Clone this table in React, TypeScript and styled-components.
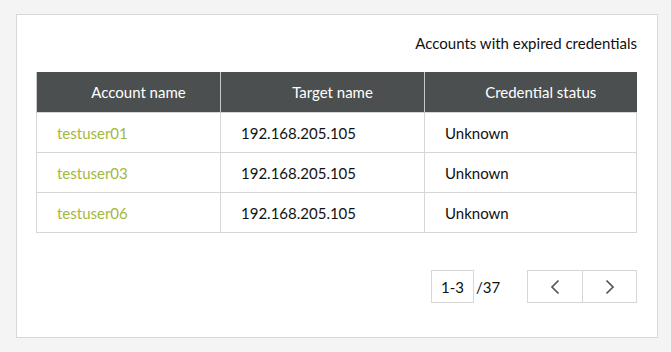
import React from "react";
import styled, {createGlobalStyle} from "styled-components";

const GlobalStyle = createGlobalStyle`
  html, body {
    margin: 0;
    padding: 0;
    background: #f4f4f4;
    font-family: "Source Sans Pro", Lato, "Noto Sans", sans-serif;
  }
`;

const Page = styled.div`
  padding: 14px 13px 14px 16px;
`;

const Card = styled.div`
  background: #fff;
  border: 1px solid #d9d9d9;
  padding: 18px 20px 0 19px;
  box-sizing: border-box;
  height: 324px;
`;

const Title = styled.div`
  text-align: right;
  font-size: 15px;
  line-height: 20px;
  color: #111;
  margin-bottom: 19px;
`;

const Table = styled.table`
  width: 100%;
  border-collapse: collapse;
  font-size: 15px;
`;

const Th = styled.th`
  background: #4b4f50;
  color: #fff;
  font-weight: 400;
  height: 40px;
  padding: 0 0 0 20px;
  text-align: center;
  border-left: 1px solid #c9c9c9;
`;

const Td = styled.td<{$link?: boolean}>`
  height: 39px;
  padding: 0 20px;
  border: 1px solid #d6d6d6;
  color: ${p => (p.$link ? "#a3b83e" : "#111")};
`;

const Footer = styled.div`
  display: flex;
  justify-content: flex-end;
  align-items: center;
  margin-top: 37px;
  font-size: 15px;
`;

const PageBox = styled.div`
  width: 41px;
  height: 31px;
  border: 1px solid #d6d6d6;
  display: flex;
  align-items: center;
  justify-content: center;
  color: #111;
`;

const Total = styled.span`
  margin-left: 2px;
  width: 51px;
  color: #111;
`;

const NavGroup = styled.div`
  display: flex;
  border: 1px solid #d6d6d6;
`;

const NavButton = styled.button`
  width: 54px;
  height: 31px;
  border: none;
  background: #fff;
  display: flex;
  align-items: center;
  justify-content: center;
  padding: 0;
  & + & {
    border-left: 1px solid #d6d6d6;
  }
`;

const rows = [
  {account: "testuser01", target: "192.168.205.105", status: "Unknown"},
  {account: "testuser03", target: "192.168.205.105", status: "Unknown"},
  {account: "testuser06", target: "192.168.205.105", status: "Unknown"},
];

const Chevron = ({dir}: {dir: "left" | "right"}) => (
  <svg width="14" height="18" viewBox="0 0 14 18" fill="none">
    <path
      d={dir === "left" ? "M10.5 2.5 L4 9 L10.5 15.5" : "M3.5 2.5 L10 9 L3.5 15.5"}
      stroke="#555"
      strokeWidth="1.7"
    />
  </svg>
);

export default function App() {
  return (
    <Page>
      <GlobalStyle />
      <Card>
        <Title>Accounts with expired credentials</Title>
        <Table>
          <colgroup>
            <col style={{width: 184}} />
            <col style={{width: 204}} />
            <col />
          </colgroup>
          <thead>
            <tr>
              <Th>Account name</Th>
              <Th>Target name</Th>
              <Th>Credential status</Th>
            </tr>
          </thead>
          <tbody>
            {rows.map(r => (
              <tr key={r.account}>
                <Td $link>{r.account}</Td>
                <Td>{r.target}</Td>
                <Td>{r.status}</Td>
              </tr>
            ))}
          </tbody>
        </Table>
        <Footer>
          <PageBox>1-3</PageBox>
          <Total>/37</Total>
          <NavGroup>
            <NavButton><Chevron dir="left" /></NavButton>
            <NavButton><Chevron dir="right" /></NavButton>
          </NavGroup>
        </Footer>
      </Card>
    </Page>
  );
}
